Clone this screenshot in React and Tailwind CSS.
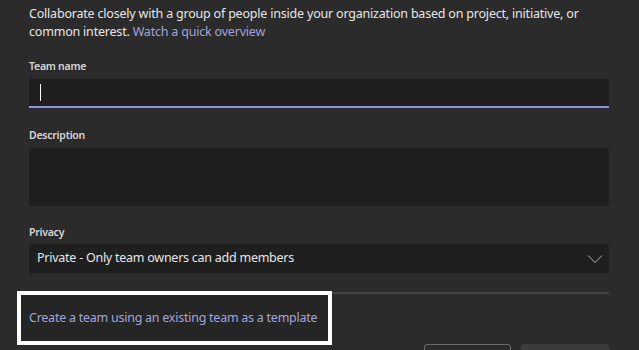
import React from 'react';

const Label = ({ children, className = '' }) => (
    <div className={`text-[10.5px] leading-[14px] font-semibold text-[#d6d6d6] tracking-[-0.25px] ${className}`}>{children}</div>
);

export default function App() {
    return (
        <div className="relative w-[639px] h-[350px] overflow-hidden bg-[#2b2b2b] font-['Noto_Sans',sans-serif]">
            <div className="ml-[29px] pt-[5px] w-[580px]">
                <p className="text-[12.5px] leading-[18px] text-[#e6e6e6] tracking-[-0.2px]">
                    Collaborate closely with a group of people inside your organization based on project, initiative, or common interest.{' '}
                    <span className="text-[#a3a4dc]">Watch a quick overview</span>
                </p>

                <Label className="mt-[18px]">Team name</Label>
                <div className="mt-[6px] h-[29px] bg-[#1f1f1f] rounded-t-[3px] border-b-2 border-[#8f92e0] flex items-center px-[11px]">
                    <span className="w-px h-[17px] bg-white"></span>
                </div>

                <Label className="mt-[20px]">Description</Label>
                <div className="mt-[6px] h-[58px] bg-[#1f1f1f] rounded-[3px]"></div>

                <Label className="mt-[19px]">Privacy</Label>
                <div className="mt-[5px] h-[29px] bg-[#1f1f1f] rounded-[3px] flex items-center justify-between pl-[8px] pr-[6px]">
                    <span className="text-[12.5px] text-[#e6e6e6] tracking-[-0.25px]">Private - Only team owners can add members</span>
                    <svg width="16" height="10" viewBox="0 0 16 10" fill="none" stroke="#b5b5b5" strokeWidth="1">
                        <path d="M1 1.5 L8 8.5 L15 1.5" />
                    </svg>
                </div>

                <div className="mt-[19px] h-[2px] bg-[#444444]"></div>

                <div className="mt-[19px] h-[18px]"></div>

                <div className="mt-[13px] flex justify-end gap-[10px]">
                    <div className="w-[87px] h-[32px] border border-[#6b6b6b] rounded-[3px]"></div>
                    <div className="w-[88px] h-[32px] bg-[#3b3b3b] rounded-[3px]"></div>
                </div>
            </div>

            {/* highlight annotation over the template link */}
            <div className="absolute left-[17px] top-[291px] w-[315px] h-[54px] border-[4px] border-white bg-[#252525] flex items-center pl-[8px]">
                <span className="whitespace-nowrap text-[12.5px] text-[#a3a4dc] tracking-[-0.25px]">Create a team using an existing team as a template</span>
            </div>
        </div>
    );
}
